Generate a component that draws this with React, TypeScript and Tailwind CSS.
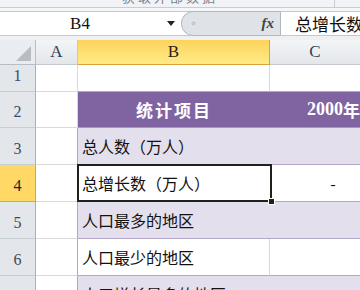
import type React from "react"

const cjk = { fontFamily: '"Noto Sans CJK SC", "Noto Sans", sans-serif' }

const RowHead: React.FC<{ n: number; h: string; active?: boolean }> = ({ n, h, active }) => (
  <div
    className={`${h} w-[36px] shrink-0 flex items-end justify-center pb-[3px] text-[16px] font-['Liberation_Serif',serif] border-r border-b ${
      active
        ? "bg-[#ffd866] border-r-[#e2a23a] border-b-[#e2a23a] text-[#222]"
        : "bg-[#e3e6eb] border-r-[#a9afb8] border-b-[#c8ccd3] text-[#3b4a5e]"
    }`}
  >
    {n}
  </div>
)

export default function App() {
  return (
    <div className="w-[360px] h-[290px] overflow-hidden bg-white flex flex-col" style={cjk}>
      {/* ribbon group label, mostly cut off */}
      <div className="h-[8px] shrink-0 bg-[#f1f3f6] border-b border-[#c9cdd3] relative overflow-hidden">
        <span className="absolute left-[122px] top-[-13px] text-[13px] tracking-[3px] text-[#7d838b]">获取外部数据</span>
        <div className="absolute left-[334px] top-0 h-full w-px bg-[#c9cdd3]" />
      </div>
      <div className="h-[3px] shrink-0 bg-[#f4f6f8]" />

      {/* formula bar */}
      <div className="h-[25px] shrink-0 flex border-y border-[#c4c8ce] bg-white">
        <div className="w-[160px] flex items-center justify-center text-[17px] text-[#111] font-['Liberation_Serif',serif]">
          B4
        </div>
        <div className="w-[21px] flex items-center justify-center">
          <svg width="8" height="5" viewBox="0 0 8 5">
            <path d="M0 0H8L4 5Z" fill="#222" />
          </svg>
        </div>
        <div className="w-[100px] -my-px flex items-center justify-between pl-[8px] pr-[6px] bg-[#dfe2e7] border border-[#b3b8bf] rounded-l-[12px]">
          <span className="w-[7px] h-[7px] rounded-full bg-[#c9cdd3] border border-[#eef0f3]" />
          <span className="text-[15px] italic font-bold text-[#444] font-['Liberation_Serif',serif]">fx</span>
        </div>
        <div className="flex-1 flex items-center pl-[14px] text-[17px] text-[#111] whitespace-nowrap overflow-hidden">
          总增长数（万人）
        </div>
      </div>
      <div className="h-[4px] shrink-0 bg-[#eef0f3]" />

      {/* column headers */}
      <div className="h-[25px] shrink-0 flex text-[17px] text-[#2f3e53] font-['Liberation_Serif',serif]">
        <div className="w-[36px] relative bg-[#e9ecf0] border-r border-b border-[#b8bec6]">
          <svg className="absolute right-[4px] bottom-[3px]" width="15" height="15" viewBox="0 0 15 15">
            <path d="M15 0V15H0Z" fill="#b9bdc3" />
          </svg>
        </div>
        <div className="w-[42px] flex items-center justify-center bg-gradient-to-b from-[#f3f5f7] to-[#e3e6ea] border-r border-b border-[#c3c8ce]">
          A
        </div>
        <div className="w-[192px] flex items-center justify-center bg-gradient-to-b from-[#fdd35c] to-[#feeb86] border-r border-b border-[#d9a33a] text-[#222]">
          B
        </div>
        <div className="flex-1 flex items-center justify-center bg-gradient-to-b from-[#f3f5f7] to-[#e3e6ea] border-b border-[#c3c8ce]">
          C
        </div>
      </div>

      {/* row 1 */}
      <div className="flex shrink-0">
        <RowHead n={1} h="h-[27px]" />
        <div className="w-[42px] border-r border-b border-[#d9d9d9]" />
        <div className="w-[192px] border-r border-b border-[#d9d9d9] border-b-[#b4a6c9]" />
        <div className="flex-1 border-b border-[#b4a6c9]" />
      </div>

      {/* row 2 */}
      <div className="flex shrink-0">
        <RowHead n={2} h="h-[36px]" />
        <div className="w-[42px] border-r border-b border-[#d9d9d9]" />
        <div className="w-[192px] flex items-center justify-center bg-[#8064a2] border-b border-[#a895c1] text-white text-[17px] font-bold tracking-[2px]">
          统计项目
        </div>
        <div className="flex-1 flex items-center pl-[37px] bg-[#8064a2] border-b border-[#a895c1] text-white text-[17px] font-bold whitespace-nowrap overflow-hidden">
          <span className="text-[18px] font-['Liberation_Serif',serif]">2000</span>年份
        </div>
      </div>

      {/* row 3 */}
      <div className="flex shrink-0">
        <RowHead n={3} h="h-[37px]" />
        <div className="w-[42px] border-r border-b border-[#d9d9d9] border-r-[#b4a6c9]" />
        <div className="w-[192px] flex items-center pl-[4px] bg-[#e4dfec] border-b border-[#b4a6c9] text-[16px] text-[#111] whitespace-nowrap">
          总人数（万人）
        </div>
        <div className="flex-1 bg-[#e4dfec] border-b border-[#b4a6c9]" />
      </div>

      {/* row 4 */}
      <div className="flex shrink-0">
        <RowHead n={4} h="h-[37px]" active />
        <div className="w-[42px] border-r border-b border-[#d9d9d9] border-r-[#b4a6c9]" />
        <div className="w-[192px] relative flex items-center pl-[4px] border-b border-[#b4a6c9] text-[16px] text-[#111] whitespace-nowrap">
          总增长数（万人）
          <div className="absolute left-[-1px] top-[-1px] right-[-2px] bottom-[-1px] border-[2px] border-[#1d2118]" />
          <div className="absolute right-[-5px] bottom-[-4px] w-[7px] h-[7px] bg-[#1d2118] border border-white" />
        </div>
        <div className="flex-1 flex items-center justify-center pl-[36px] border-b border-[#b4a6c9] text-[16px] text-[#111]">
          -
        </div>
      </div>

      {/* row 5 */}
      <div className="flex shrink-0">
        <RowHead n={5} h="h-[37px]" />
        <div className="w-[42px] border-r border-b border-[#d9d9d9] border-r-[#b4a6c9]" />
        <div className="w-[192px] flex items-center pl-[4px] bg-[#e4dfec] border-b border-[#b4a6c9] text-[16px] text-[#111] whitespace-nowrap">
          人口最多的地区
        </div>
        <div className="flex-1 bg-[#e4dfec] border-b border-[#b4a6c9]" />
      </div>

      {/* row 6 */}
      <div className="flex shrink-0">
        <RowHead n={6} h="h-[37px]" />
        <div className="w-[42px] border-r border-b border-[#d9d9d9] border-r-[#b4a6c9]" />
        <div className="w-[192px] flex items-center pl-[4px] border-r border-[#d9d9d9] border-b border-b-[#b4a6c9] text-[16px] text-[#111] whitespace-nowrap">
          人口最少的地区
        </div>
        <div className="flex-1 border-b border-[#b4a6c9]" />
      </div>

      {/* row 7 */}
      <div className="flex shrink-0">
        <RowHead n={7} h="h-[37px]" />
        <div className="w-[42px] border-r border-b border-[#d9d9d9] border-r-[#b4a6c9]" />
        <div className="w-[192px] flex items-center pl-[4px] bg-[#e4dfec] border-b border-[#b4a6c9] text-[16px] text-[#111] whitespace-nowrap">
          人口增长最多的地区
        </div>
        <div className="flex-1 bg-[#e4dfec] border-b border-[#b4a6c9]" />
      </div>
    </div>
  )
}
